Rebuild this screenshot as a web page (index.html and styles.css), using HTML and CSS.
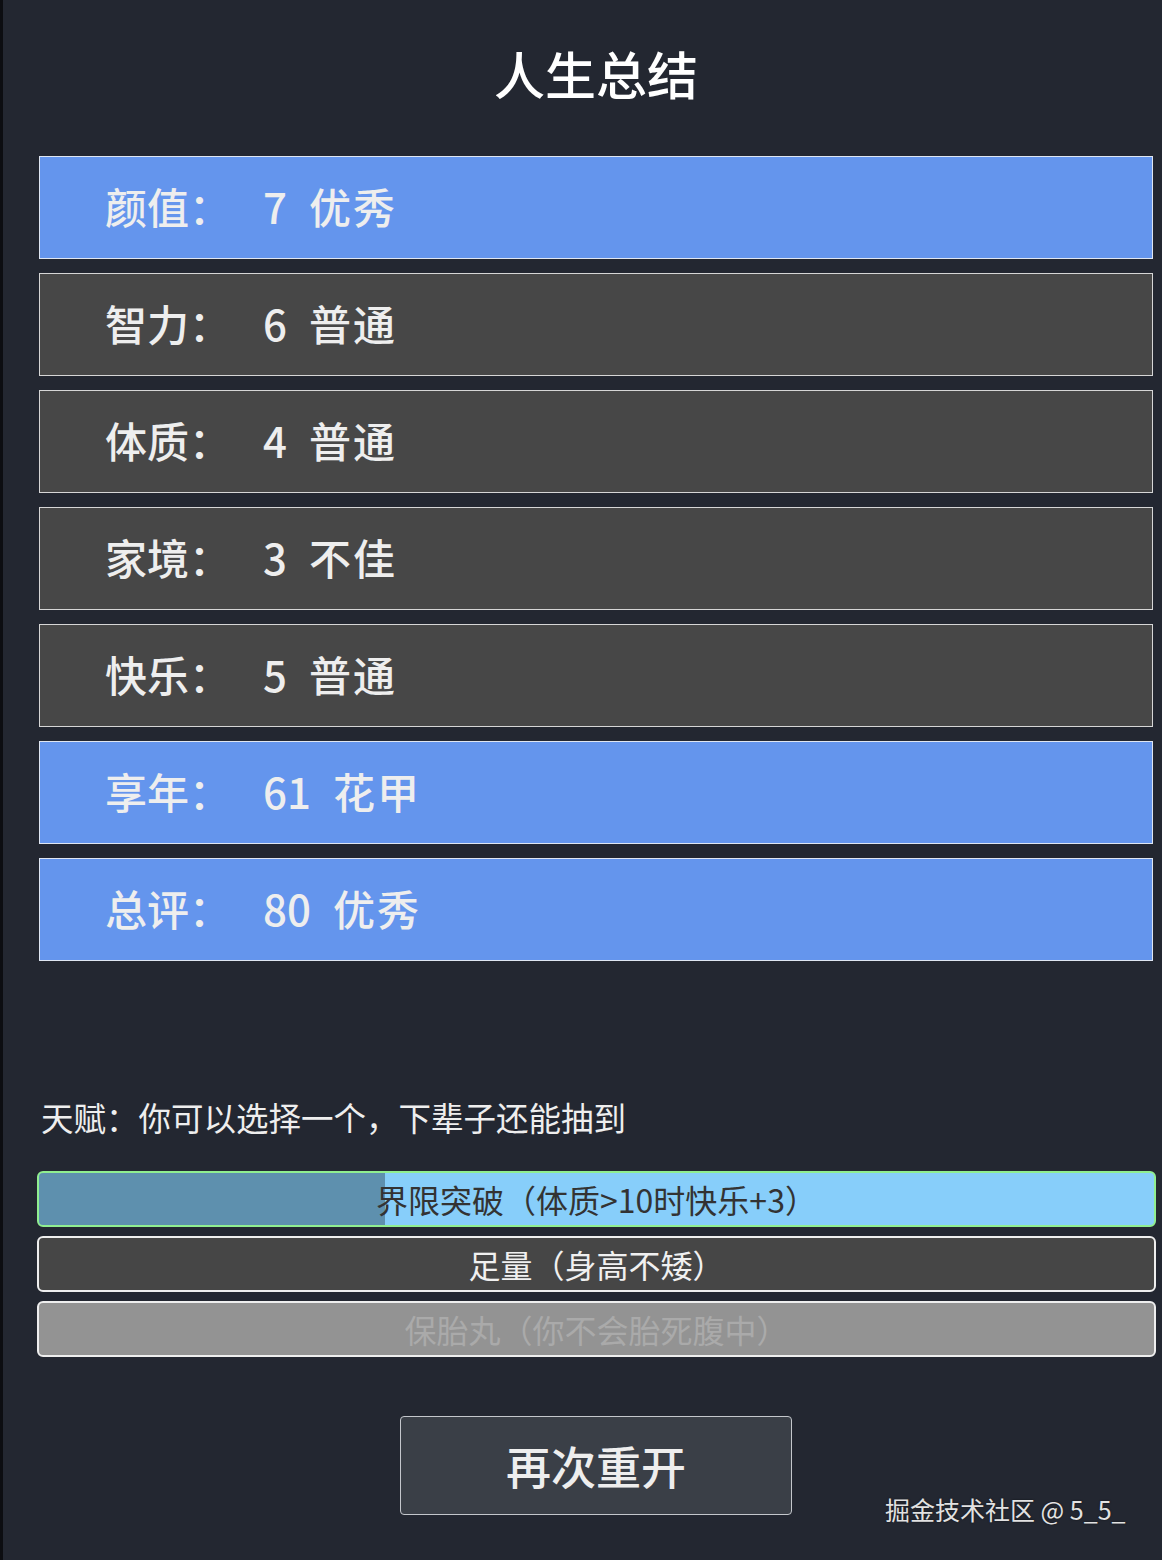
FILE: index.html
```html
<!DOCTYPE html>
<html lang="zh-CN">
<head>
<meta charset="utf-8">
<title>人生总结</title>
<link rel="stylesheet" href="styles.css">
</head>
<body>
<div class="page">
  <h1 class="title">人生总结</h1>
  <div class="props">
    <div class="prop prop-good"><span class="label">颜值：</span><span class="val">7</span><span class="grade">优秀</span></div>
    <div class="prop"><span class="label">智力：</span><span class="val">6</span><span class="grade">普通</span></div>
    <div class="prop"><span class="label">体质：</span><span class="val">4</span><span class="grade">普通</span></div>
    <div class="prop"><span class="label">家境：</span><span class="val">3</span><span class="grade">不佳</span></div>
    <div class="prop"><span class="label">快乐：</span><span class="val">5</span><span class="grade">普通</span></div>
    <div class="prop prop-good"><span class="label">享年：</span><span class="val">61</span><span class="grade">花甲</span></div>
    <div class="prop prop-good"><span class="label">总评：</span><span class="val">80</span><span class="grade">优秀</span></div>
  </div>
  <div class="talent">
    <p class="talent-tip">天赋：你可以选择一个，下辈子还能抽到</p>
    <div class="talent-list">
      <div class="talent-item talent-selected"><span class="progress" style="width:31%"></span><span class="t-text">界限突破（体质&gt;10时快乐+3）</span></div>
      <div class="talent-item talent-normal"><span class="t-text">足量（身高不矮）</span></div>
      <div class="talent-item talent-disabled"><span class="t-text">保胎丸（你不会胎死腹中）</span></div>
    </div>
  </div>
  <div class="actions">
    <button class="restart">再次重开</button>
  </div>
  <div class="watermark">掘金技术社区 @ 5_5_</div>
</div>
</body>
</html>
```
FILE: styles.css
```css
html {
  background: #232731;
}
body {
  margin: 0;
  font-family: "Noto Sans CJK SC", "Noto Sans", sans-serif;
  color: #eeeeee;
}
.page {
  position: relative;
  min-height: 1560px;
  box-sizing: border-box;
  border-left: 3px solid #0c0d11;
  padding: 36px 9px 0 36px;
  background: #232731;
}
.title {
  margin: 0 0 45px;
  font-size: 51px;
  line-height: 75px;
  font-weight: 500;
  text-align: center;
  color: #ffffff;
}
.props {
  display: flex;
  flex-direction: column;
  gap: 14px;
}
.prop {
  box-sizing: border-box;
  height: 103px;
  border: 1px solid #d6d6d6;
  background: #474747;
  display: flex;
  align-items: center;
  padding-left: 65px;
  padding-bottom: 5px;
  font-size: 42px;
  font-weight: 500;
  color: #eeeeee;
}
.prop-good {
  background: #6495ed;
  border-color: #dfe6f2;
}
.label {
  width: 127px;
}
.val {
  margin-left: 31px;
  margin-right: 22px;
}
.grade {
  letter-spacing: 2px;
}
.talent {
  margin-top: 133px;
}
.talent-tip {
  margin: 0 0 31px 2px;
  font-size: 32.5px;
  line-height: 46px;
  color: #eeeeee;
}
.talent-list {
  display: flex;
  flex-direction: column;
  gap: 9px;
  margin: 0 -3px 0 -2px;
}
.talent-item {
  position: relative;
  box-sizing: border-box;
  height: 56px;
  border: 2px solid #eeeeee;
  border-radius: 6px;
  display: flex;
  align-items: center;
  justify-content: center;
  font-size: 32px;
  overflow: hidden;
}
.talent-selected {
  background: #87cefa;
  border-color: #90ee90;
  color: #333333;
}
.progress {
  position: absolute;
  left: 0;
  top: 0;
  bottom: 0;
  background: rgba(0, 0, 0, 0.3);
}
.t-text {
  position: relative;
}
.talent-normal {
  background: #464646;
  color: #f0f0f0;
}
.talent-disabled {
  background: #939393;
  color: #aaaaaa;
}
.actions {
  display: flex;
  justify-content: center;
  margin-top: 59px;
}
.restart {
  width: 392px;
  height: 99px;
  box-sizing: border-box;
  background: #3a3f47;
  border: 1px solid #c4c7cc;
  border-radius: 4px;
  color: #eeeeee;
  font-family: "Noto Sans CJK SC", "Noto Sans", sans-serif;
  font-size: 45px;
  font-weight: 500;
  padding: 0;
}
.watermark {
  position: absolute;
  left: 882px;
  top: 1493px;
  font-size: 25px;
  line-height: 32px;
  color: #e2e2e2;
  text-shadow: 0 0 2px rgba(0, 0, 0, 0.6);
}
```
